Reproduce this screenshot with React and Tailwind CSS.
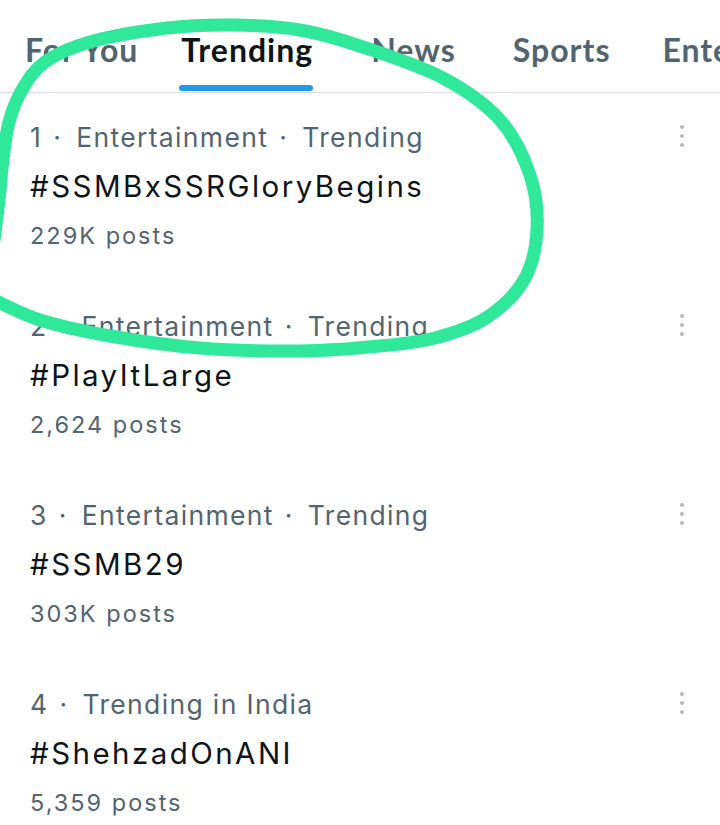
import { Fragment } from 'react';

const tabs = [
  { label: 'For You', gap: 'ml-[25px]', active: false },
  { label: 'Trending', gap: 'ml-[43px]', active: true },
  { label: 'News', gap: 'ml-[58px]', active: false },
  { label: 'Sports', gap: 'ml-[57px]', active: false },
  { label: 'Entertainment', gap: 'ml-[52px]', active: false },
];

const trends = [
  { rank: 1, meta: ['Entertainment', 'Trending'], tag: '#SSMBxSSRGloryBegins', posts: '229K posts' },
  { rank: 2, meta: ['Entertainment', 'Trending'], tag: '#PlayItLarge', posts: '2,624 posts' },
  { rank: 3, meta: ['Entertainment', 'Trending'], tag: '#SSMB29', posts: '303K posts' },
  { rank: 4, meta: ['Trending in India'], tag: '#ShehzadOnANI', posts: '5,359 posts' },
];

// hand-drawn marker loop, points traced from the screenshot
const loop = [
  [-6, 240], [-1, 200], [3, 160], [9, 122], [22, 90], [45, 62], [90, 42], [167, 28],
  [233, 25], [300, 30], [360, 46], [443, 78], [500, 120], [530, 175], [537, 230],
  [524, 280], [486, 318], [435, 338], [380, 346], [300, 351], [200, 348], [110, 336],
  [40, 320], [-6, 300],
];

function smoothPath(pts) {
  let d = `M ${pts[0][0]} ${pts[0][1]}`;
  for (let i = 0; i < pts.length - 1; i++) {
    const p0 = pts[i - 1] || pts[i];
    const p1 = pts[i];
    const p2 = pts[i + 1];
    const p3 = pts[i + 2] || p2;
    const c1 = [p1[0] + (p2[0] - p0[0]) / 6, p1[1] + (p2[1] - p0[1]) / 6];
    const c2 = [p2[0] - (p3[0] - p1[0]) / 6, p2[1] - (p3[1] - p1[1]) / 6];
    d += ` C ${c1[0].toFixed(1)} ${c1[1].toFixed(1)}, ${c2[0].toFixed(1)} ${c2[1].toFixed(1)}, ${p2[0]} ${p2[1]}`;
  }
  return d;
}

function MoreDots() {
  return (
    <div className="flex flex-col items-center gap-[5px] pt-[12px] pr-[36px]">
      <span className="h-[4px] w-[4px] rounded-full bg-[#b4b9bd]" />
      <span className="h-[4px] w-[4px] rounded-full bg-[#b4b9bd]" />
      <span className="h-[4px] w-[4px] rounded-full bg-[#b4b9bd]" />
    </div>
  );
}

export default function App() {
  return (
    <div className="relative w-[720px] h-[825px] overflow-hidden bg-white font-['Inter',sans-serif]">
      <div className="flex h-[93px] border-b border-[#dcdfe2] font-['Lato',sans-serif] whitespace-nowrap">
        {tabs.map((tab) => (
          <div key={tab.label} className={`relative flex shrink-0 items-center pt-[8px] ${tab.gap}`}>
            <span
              className={`text-[32px] font-bold tracking-[1px] ${tab.active ? 'text-[#0f1419]' : 'text-[#536471]'}`}
            >
              {tab.label}
            </span>
            {tab.active && (
              <span className="absolute bottom-[1px] left-[-2px] right-0 h-[6px] rounded-full bg-[#1d9bf0]" />
            )}
          </div>
        ))}
      </div>

      <div>
        {trends.map((t) => (
          <div key={t.rank} className="flex justify-between pl-[30px] pt-[20px] pb-[22px]">
            <div className="flex flex-col">
              <div className="text-[26.5px] leading-[49px] tracking-[1.35px] text-[#536471] whitespace-nowrap">
                {t.rank}
                {t.meta.map((m) => (
                  <Fragment key={m}>
                    <span className="ml-[11px] mr-[14px]">·</span>
                    {m}
                  </Fragment>
                ))}
              </div>
              <div className="text-[29.5px] leading-[49px] tracking-[2.45px] text-[#0f1419]">{t.tag}</div>
              <div className="text-[23.5px] leading-[49px] tracking-[2px] text-[#536471]">{t.posts}</div>
            </div>
            <MoreDots />
          </div>
        ))}
      </div>

      <svg className="pointer-events-none absolute left-0 top-0" width="720" height="825" viewBox="0 0 720 825">
        <path d={smoothPath(loop)} fill="none" stroke="#30e89a" strokeWidth="13" strokeLinecap="round" strokeLinejoin="round" />
      </svg>
    </div>
  );
}
